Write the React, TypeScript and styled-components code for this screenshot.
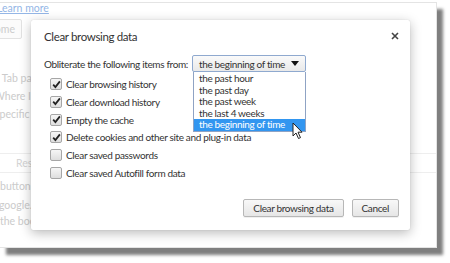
import React from 'react';
import styled, { createGlobalStyle } from 'styled-components';

const GlobalStyle = createGlobalStyle`
  html, body {
    margin: 0;
    padding: 0;
    background: #ffffff;
  }
  body {
    font-family: Lato, "Open Sans", "Liberation Sans", sans-serif;
    color: #333333;
  }
`;

const Frame = styled.div`
  width: 450px;
  height: 263px;
  padding-top: 2px;
  box-sizing: border-box;
  overflow: hidden;
`;

const Page = styled.div`
  position: relative;
  width: 437px;
  height: 246px;
  background: #ffffff;
  border: 1px solid #e4e4e4;
  border-left: none;
  box-sizing: border-box;
  box-shadow: 6px 7px 3px rgba(0, 0, 0, 0.5);
`;

const Faded = styled.div`
  font-size: 10.5px;
  color: #cbcbcb;
  line-height: 1;
  overflow: hidden;
  height: 100%;
`;

const FadedLink = styled.div`
  color: #94b6e6;
  text-decoration: underline;
  margin-left: -3px;
`;

const FadedButton = styled.div<{ $top: number }>`
  display: inline-block;
  margin-top: ${p => p.$top}px;
  margin-left: -20px;
  padding: 4px 6px;
  border: 1px solid #e2e2e2;
  border-radius: 2px;
  background: #fbfbfb;
  color: #cccccc;
`;

const FadedLine = styled.div<{ $top: number; $left?: number }>`
  margin-top: ${p => p.$top}px;
  margin-left: ${p => p.$left ?? 0}px;
  white-space: nowrap;
`;

const Separator = styled.div`
  margin-top: 33px;
  border-top: 1px solid #eeeeee;
  padding: 4px 0 4px 16px;
  border-bottom: 1px solid #eeeeee;
  color: #d4d4d4;
`;

const Dialog = styled.div`
  position: absolute;
  left: 31px;
  top: 17px;
  width: 379px;
  height: 210px;
  box-sizing: border-box;
  background: #ffffff;
  border-radius: 2px;
  box-shadow: 0 3px 12px rgba(0, 0, 0, 0.28), 0 0 1px rgba(0, 0, 0, 0.2);
  padding: 8px 11px 0 13px;
  display: flex;
  flex-direction: column;
  font-size: 10px;
  letter-spacing: -0.35px;
  color: #333333;
`;

const Header = styled.div`
  display: flex;
  align-items: center;
  justify-content: space-between;
  height: 16px;
`;

const Title = styled.div`
  font-size: 11.5px;
  color: #333333;
`;

const Close = styled.div`
  width: 16px;
  height: 16px;
  display: flex;
  align-items: center;
  justify-content: center;
  margin-right: -4px;
`;

const FromRow = styled.div`
  display: flex;
  align-items: center;
  margin-top: 11px;
  gap: 4px;
  white-space: nowrap;
`;

const SelectWrap = styled.div`
  position: relative;
  flex: none;
`;

const SelectBox = styled.div`
  width: 114px;
  height: 17px;
  box-sizing: border-box;
  border: 1px solid #8fa9cf;
  border-radius: 2px;
  background: linear-gradient(#fafafa, #e9e9e9);
  display: flex;
  align-items: center;
  justify-content: space-between;
  padding: 0 6px;
`;

const Arrow = styled.div`
  width: 0;
  height: 0;
  border-left: 4px solid transparent;
  border-right: 4px solid transparent;
  border-top: 5px solid #111111;
`;

const List = styled.div`
  position: absolute;
  left: 1px;
  top: 17px;
  width: 113px;
  box-sizing: border-box;
  border: 1px solid #8fa3c4;
  border-top: none;
  background: #ffffff;
  padding-top: 1px;
  z-index: 2;
`;

const Option = styled.div<{ $active?: boolean }>`
  height: 11.6px;
  line-height: 11.6px;
  padding-left: 5px;
  background: ${p => (p.$active ? '#3296f0' : 'transparent')};
  color: ${p => (p.$active ? '#ffffff' : '#333333')};
  white-space: nowrap;
`;

const Cursor = styled.svg`
  position: absolute;
  left: 100px;
  top: 67px;
  z-index: 3;
`;

const Checks = styled.div`
  display: flex;
  flex-direction: column;
  gap: 5.8px;
  margin-top: 6px;
  padding-left: 6px;
`;

const CheckRow = styled.label`
  display: flex;
  align-items: center;
  gap: 4px;
  height: 12px;
  white-space: nowrap;
`;

const Box = styled.span`
  width: 12px;
  height: 12px;
  box-sizing: border-box;
  border: 1px solid #a6a6a6;
  border-radius: 2px;
  background: linear-gradient(#f6f6f6, #dedede);
  display: flex;
  align-items: center;
  justify-content: center;
  flex: none;
`;

const Footer = styled.div`
  margin-top: auto;
  margin-bottom: 13px;
  display: flex;
  justify-content: flex-end;
  gap: 8px;
`;

const Button = styled.button`
  font-family: inherit;
  font-size: 10px;
  letter-spacing: -0.35px;
  color: #333333;
  height: 18px;
  padding: 0 9px;
  border: 1px solid #b7b7b7;
  border-radius: 2px;
  background: linear-gradient(#f8f8f8, #e6e6e6);
  box-shadow: 0 1px 0 rgba(0, 0, 0, 0.06);
`;

const Check = () => (
  <svg width="9" height="9" viewBox="0 0 9 9">
    <path d="M1.2 4.6 L3.4 7 L7.9 1.4" fill="none" stroke="#222" strokeWidth="1.8" />
  </svg>
);

const items: [string, boolean][] = [
  ['Clear browsing history', true],
  ['Clear download history', true],
  ['Empty the cache', true],
  ['Delete cookies and other site and plug-in data', true],
  ['Clear saved passwords', false],
  ['Clear saved Autofill form data', false],
];

const periods = [
  'the past hour',
  'the past day',
  'the past week',
  'the last 4 weeks',
  'the beginning of time',
];

const App = () => {
  return (
    <>
      <GlobalStyle />
      <Frame>
        <Page>
          <Faded>
            <FadedLink>Learn more</FadedLink>
            <FadedButton $top={5}>Home</FadedButton>
            <FadedLine $top={34} $left={-22}>New Tab page</FadedLine>
            <FadedLine $top={7} $left={-6}>Where I left off</FadedLine>
            <FadedLine $top={8} $left={-6}>Specific pages</FadedLine>
            <Separator>Reset</Separator>
            <FadedLine $top={8}>button</FadedLine>
            <FadedLine $top={8} $left={-28}>www.google.com/</FadedLine>
            <FadedLine $top={6}>the bookmarks</FadedLine>
          </Faded>
          <Dialog>
            <Header>
              <Title>Clear browsing data</Title>
              <Close>
                <svg width="8" height="8" viewBox="0 0 8 8">
                  <path d="M1 1 L7 7 M7 1 L1 7" stroke="#444" strokeWidth="1.6" />
                </svg>
              </Close>
            </Header>
            <FromRow>
              <span>Obliterate the following items from:</span>
              <SelectWrap>
                <SelectBox>
                  <span>the beginning of time</span>
                  <Arrow />
                </SelectBox>
                <List>
                  {periods.map((p, i) => (
                    <Option key={p} $active={i === periods.length - 1}>{p}</Option>
                  ))}
                </List>
                <Cursor width="12" height="18" viewBox="0 0 12 18">
                  <path d="M1 1 L1 14 L4 11 L6.5 16.5 L8.5 15.6 L6 10.2 L10 10.2 Z" fill="#fff" stroke="#222" strokeWidth="1" />
                </Cursor>
              </SelectWrap>
            </FromRow>
            <Checks>
              {items.map(([label, on]) => (
                <CheckRow key={label}>
                  <Box>{on && <Check />}</Box>
                  <span>{label}</span>
                </CheckRow>
              ))}
            </Checks>
            <Footer>
              <Button>Clear browsing data</Button>
              <Button>Cancel</Button>
            </Footer>
          </Dialog>
        </Page>
      </Frame>
    </>
  );
};

export default App;
